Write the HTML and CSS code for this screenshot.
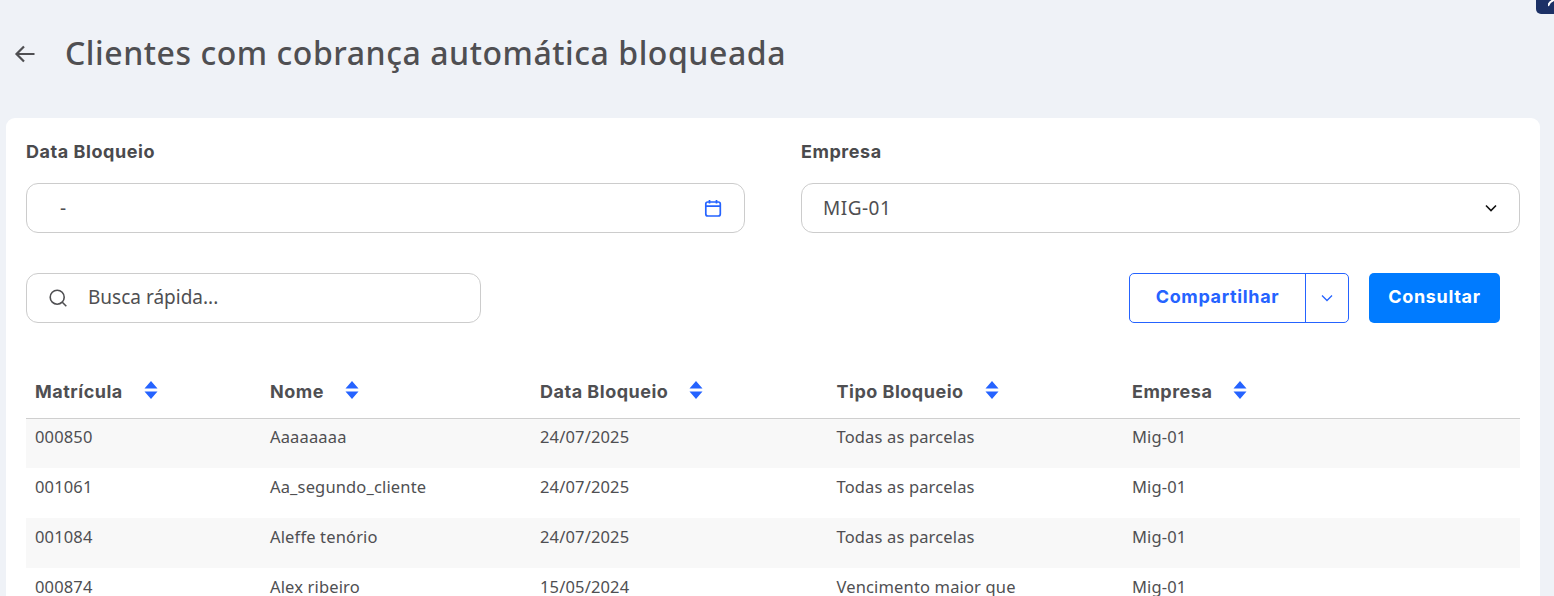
FILE: index.html
```html
<!DOCTYPE html>
<html lang="pt-BR">
<head>
<meta charset="utf-8">
<title>Clientes com cobrança automática bloqueada</title>
<link rel="stylesheet" href="styles.css">
</head>
<body>
<div class="corner-badge"><svg width="6" height="7" viewBox="0 0 6 7"><path d="M0 6 C1 3 3 1 6 0" stroke="#fff" stroke-width="2" fill="none"/></svg></div>
<header class="page-head">
  <svg class="back" width="22" height="20" viewBox="0 0 22 20"><path d="M20.500 10H2.500M10 2.500 2.500 10l7.500 7.500" fill="none" stroke="#4f4f52" stroke-width="2.200"/></svg>
  <h1 class="title">Clientes com cobrança automática bloqueada</h1>
</header>
<main class="card">
  <section class="filters">
    <div class="field">
      <label class="label">Data Bloqueio</label>
      <div class="input date-input">
        <span class="dash">-</span>
        <svg width="18" height="18" viewBox="0 0 18 18" fill="none" stroke="#2563ff" stroke-width="1.700"><rect x="1.800" y="3" width="14.500" height="14" rx="2"/><path d="M2 7.200h14M5.500 1v3.500M12.500 1v3.500"/></svg>
      </div>
    </div>
    <div class="field">
      <label class="label">Empresa</label>
      <div class="input select-input">
        <span class="value">MIG-01</span>
        <svg width="12" height="8" viewBox="0 0 12 8" fill="none" stroke="#111" stroke-width="1.600"><path d="M1 1.500 6 6.500l5-5"/></svg>
      </div>
    </div>
  </section>
  <section class="toolbar">
    <div class="input search">
      <svg width="20" height="20" viewBox="0 0 20 20" fill="none" stroke="#4f4f52" stroke-width="1.600"><circle cx="9.200" cy="9.200" r="7"/><path d="m14.300 14.300 4 4"/></svg>
      <span class="placeholder">Busca rápida...</span>
    </div>
    <div class="actions">
      <div class="split">
        <button class="split-main">Compartilhar</button>
        <button class="split-arrow"><svg width="12" height="8" viewBox="0 0 12 8" fill="none" stroke="#2563ff" stroke-width="1.300"><path d="M1 1.500 6 6.500l5-5"/></svg></button>
      </div>
      <button class="primary">Consultar</button>
    </div>
  </section>
  <table class="table">
    <colgroup><col class="c1"><col class="c2"><col class="c3"><col class="c4"><col class="c5"></colgroup>
    <thead>
      <tr>
        <th><span class="th">Matrícula<svg class="sort" width="14" height="20" viewBox="0 0 14 20"><path d="M7 1 13.500 8.500H.500zM7 19 .500 11.500h13z" fill="#2563ff"/></svg></span></th>
        <th><span class="th">Nome<svg class="sort" width="14" height="20" viewBox="0 0 14 20"><path d="M7 1 13.500 8.500H.500zM7 19 .500 11.500h13z" fill="#2563ff"/></svg></span></th>
        <th><span class="th">Data Bloqueio<svg class="sort" width="14" height="20" viewBox="0 0 14 20"><path d="M7 1 13.500 8.500H.500zM7 19 .500 11.500h13z" fill="#2563ff"/></svg></span></th>
        <th><span class="th">Tipo Bloqueio<svg class="sort" width="14" height="20" viewBox="0 0 14 20"><path d="M7 1 13.500 8.500H.500zM7 19 .500 11.500h13z" fill="#2563ff"/></svg></span></th>
        <th><span class="th">Empresa<svg class="sort" width="14" height="20" viewBox="0 0 14 20"><path d="M7 1 13.500 8.500H.500zM7 19 .500 11.500h13z" fill="#2563ff"/></svg></span></th>
      </tr>
    </thead>
    <tbody>
      <tr><td>000850</td><td>Aaaaaaaa</td><td>24/07/2025</td><td>Todas as parcelas</td><td>Mig-01</td></tr>
      <tr><td>001061</td><td>Aa_segundo_cliente</td><td>24/07/2025</td><td>Todas as parcelas</td><td>Mig-01</td></tr>
      <tr><td>001084</td><td>Aleffe tenório</td><td>24/07/2025</td><td>Todas as parcelas</td><td>Mig-01</td></tr>
      <tr><td>000874</td><td>Alex ribeiro</td><td>15/05/2024</td><td>Vencimento maior que</td><td>Mig-01</td></tr>
    </tbody>
  </table>
</main>
</body>
</html>
```
FILE: styles.css
```css
* { box-sizing: border-box; }
html, body { height: 100%; }
body {
  margin: 0;
  height: 596px;
  overflow: hidden;
  background: #eff2f7;
  color: #4f4f52;
  font-family: "Noto Sans", "Open Sans", sans-serif;
}
.corner-badge {
  position: absolute;
  top: 0;
  right: 0;
  width: 18px;
  height: 14px;
  background: #1c3166;
  border-bottom-left-radius: 5px;
  display: flex;
  justify-content: flex-end;
  overflow: hidden;
}
.page-head {
  height: 118px;
  padding: 33px 0 0 14px;
  display: flex;
  align-items: flex-start;
  gap: 29px;
}
.back { margin-top: 11px; }
.title {
  margin: 0;
  font-size: 32px;
  line-height: 40px;
  font-weight: 500;
  letter-spacing: 0.55px;
  color: #4f4f52;
}
.card {
  margin: 0 14px 0 6px;
  background: #fff;
  border-radius: 9px 9px 0 0;
  padding: 21px 20px 20px;
}
.filters {
  display: grid;
  grid-template-columns: 719px 719px;
  gap: 56px;
}
.label {
  display: block;
  height: 44px;
  font-family: "Inter", sans-serif;
  font-size: 18px;
  font-weight: 700;
  letter-spacing: 0.55px;
  line-height: 25px;
  color: #4a4a4d;
}
.input {
  height: 50px;
  border: 1px solid #cccccc;
  border-radius: 12px;
  display: flex;
  align-items: center;
  font-size: 19px;
  line-height: 24px;
  color: #4f4f52;
}
.placeholder { padding-bottom: 2px; }
.value { letter-spacing: 0.5px; }
.date-input { justify-content: space-between; padding: 0 22px 0 33px; }
.select-input { justify-content: space-between; padding: 0 22px 0 21px; }
.toolbar {
  margin-top: 40px;
  display: flex;
  justify-content: space-between;
  padding-right: 20px;
}
.search { width: 455px; gap: 20px; padding-left: 21px; }
.actions { display: flex; gap: 20px; }
.split {
  display: flex;
  width: 220px;
  height: 50px;
  border: 1px solid #2563ff;
  border-radius: 5px;
}
button {
  font-family: "Inter", sans-serif;
  font-size: 18px;
  font-weight: 700;
  letter-spacing: 0.65px;
  border: 0;
  background: none;
  padding: 0 0 4px;
}
.split-main { width: 176px; color: #2563ff; border-right: 1px solid #2563ff; }
.split-arrow { flex: 1; display: flex; align-items: center; justify-content: center; padding: 0; }
.primary {
  width: 131px;
  height: 50px;
  background: #007bff;
  border-radius: 5px;
  color: #fff;
}
.table {
  margin-top: 40px;
  width: 1494px;
  table-layout: fixed;
  border-collapse: collapse;
}
.c1 { width: 235px; }
.c2 { width: 270px; }
.c3 { width: 296.5px; }
.c4 { width: 295.5px; }
th {
  height: 55px;
  padding: 3px 9px 0;
  text-align: left;
  border-bottom: 1px solid #cfcfcf;
  font-family: "Inter", sans-serif;
  font-size: 18px;
  font-weight: 700;
  letter-spacing: 0.5px;
  color: #4f4f52;
}
.th { display: inline-flex; align-items: center; gap: 21px; }
.sort { position: relative; top: -2px; }
td {
  height: 50px;
  padding: 0 9px 14px;
  font-size: 16.500px;
  letter-spacing: 0.150px;
  color: #4f4f52;
}
tbody tr:nth-child(odd) { background: #f8f8f8; }
```
